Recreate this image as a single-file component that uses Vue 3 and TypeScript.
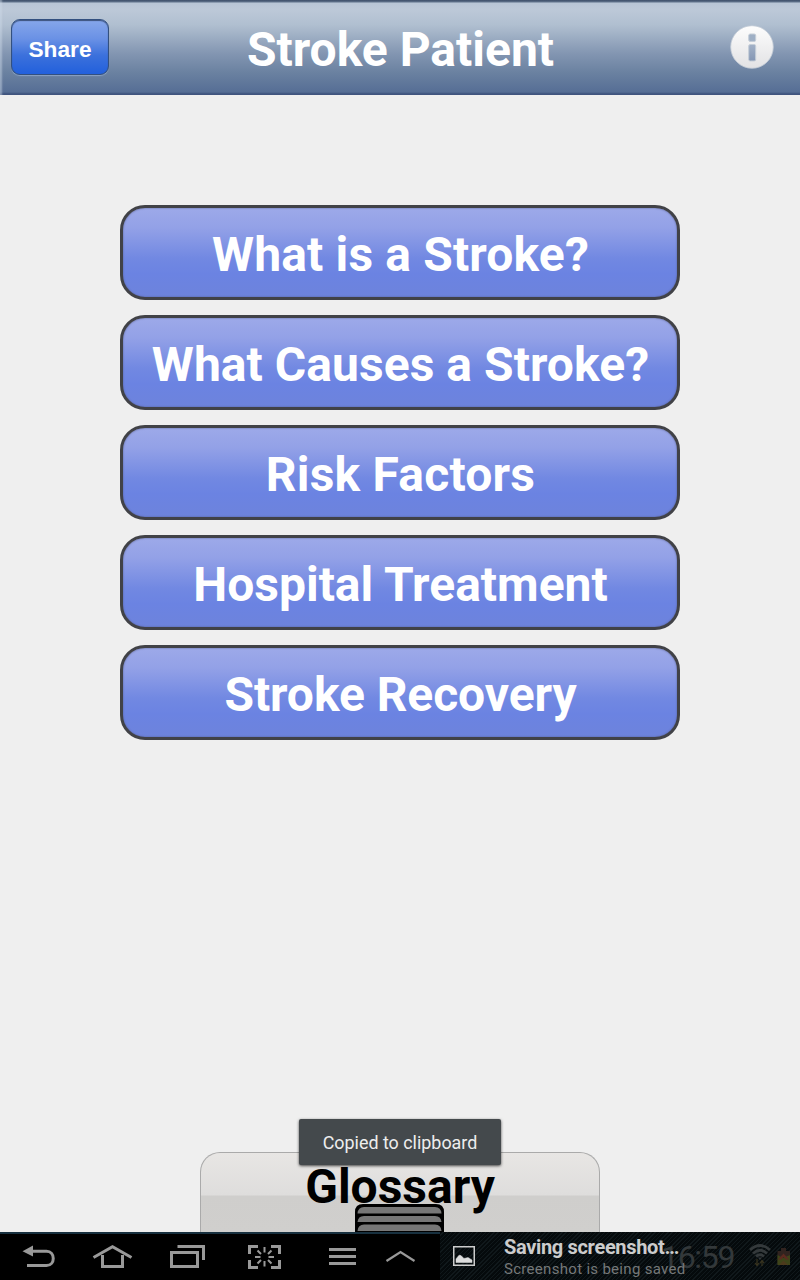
<script setup lang="ts">
interface Topic {
  label: string
  spacing: number
}

const topics: Topic[] = [
  { label: 'What is a Stroke?', spacing: 0.15 },
  { label: 'What Causes a Stroke?', spacing: 0.05 },
  { label: 'Risk Factors', spacing: 0.2 },
  { label: 'Hospital Treatment', spacing: 0 },
  { label: 'Stroke Recovery', spacing: -0.08 },
]
</script>

<template>
  <div class="screen">
    <header class="header">
      <button class="share">Share</button>
      <h1 class="title">Stroke Patient</h1>
      <svg class="info" width="44" height="44" viewBox="0 0 44 44">
        <defs>
          <linearGradient id="infoFill" x1="0" y1="0" x2="0" y2="1">
            <stop offset="0" stop-color="#fdfdfd" />
            <stop offset="1" stop-color="#e2e2e4" />
          </linearGradient>
          <linearGradient id="infoMark" x1="0" y1="0" x2="0" y2="1">
            <stop offset="0" stop-color="#a2b1c7" />
            <stop offset="1" stop-color="#8496b4" />
          </linearGradient>
        </defs>
        <circle cx="22" cy="22" r="21.3" fill="url(#infoFill)" stroke="#c2cad6" stroke-width="0.8" />
        <rect x="18.700" y="9" width="7" height="7.400" rx="1.500" fill="#9eafc5" stroke="#c5ced8" />
        <rect x="18.700" y="19.500" width="7" height="16.500" rx="1.500" fill="url(#infoMark)" stroke="#c5ced8" />
      </svg>
    </header>

    <main class="topics">
      <button v-for="t in topics" :key="t.label" class="topic">
        <span :style="{ letterSpacing: t.spacing + 'px' }">{{ t.label }}</span>
      </button>
    </main>

    <section class="drawer">
      <div class="toast">Copied to clipboard</div>
      <h2 class="glossary">Glossary</h2>
      <svg class="grip" width="90" height="29" viewBox="0 0 90 29">
        <path d="M0 29V8Q0 0 8 0H81Q89 0 89 8V29Z" fill="#000" />
        <path d="M2.500 9.500Q3 3 9 3H80Q86 3 86.500 9.500Z" fill="#777" />
        <path d="M2.500 18Q3 12 9 12H80Q86 12 86.500 18Z" fill="#777" />
        <path d="M2.500 27Q3 20.500 9 20.500H80Q86 20.500 86.500 27Z" fill="#777" />
      </svg>
    </section>

    <footer class="navbar">
      <svg class="keys" width="440" height="48" viewBox="0 0 440 48" fill="none" stroke="#999" stroke-width="3">
        <path d="M31 19.300H46.500C55.500 19.300 55.500 33.500 46.500 33.500H27" />
        <path d="M22.500 19.300L33 13.500V24.500Z" fill="#999" stroke="none" />
        <path d="M93.500 25.500L112.500 14.800L131.500 25.500" />
        <path d="M102.500 23V34.500H122.500V23" />
        <rect x="171.500" y="20.500" width="26" height="14" />
        <path d="M177.500 14.500H203.500V28" />
        <path d="M249.500 22V14.500H258M271 14.500H279.500V22M279.500 28V35.500H271M258 35.500H249.500V28" />
        <path d="M264.500 15V20.500M264.500 29V34.500M255 25H260.500M268.500 25H274M257.500 18.500L261 22M271.500 18.500L268 22M257.500 31.500L261 28M271.500 31.500L268 28" stroke-width="2" />
        <path d="M329 17.500H356M329 24.500H356M329 31.500H356" />
        <path d="M386.500 29L400.500 20L414.500 29" stroke-width="2.200" />
      </svg>
      <div class="notice">
        <svg class="photo" width="22" height="20" viewBox="0 0 22 20">
          <rect x="0.750" y="0.750" width="20.500" height="18.500" fill="none" stroke="#ccc" stroke-width="1.500" />
          <path d="M3 16.500V13L6 9.300L8 9.500L11 12.500L15 11.500L19 14V16.500Z" fill="#ddd" stroke="#ddd" stroke-width="0.500" />
        </svg>
        <div class="notice-text">
          <div class="notice-title">Saving screenshot…</div>
          <div class="notice-body">Screenshot is being saved</div>
        </div>
        <div class="clock">16:59</div>
        <svg class="status" width="50" height="30" viewBox="0 0 50 30">
          <g fill="none" stroke="#34393b" stroke-width="2.700">
            <path d="M1 7Q11 -2 21 7" />
            <path d="M4 10.500Q11 4 18 10.500" />
            <path d="M7 13.500Q11 10 15 13.500" />
          </g>
          <path d="M9 14.500H13L11 17Z" fill="#34393b" />
          <path d="M8 16V22M6 20L8 22.500L10 20M13 23V17.500M11 20L13 17.500L15 20" fill="none" stroke="#39341f" stroke-width="1.200" />
          <path d="M28.500 8H32V5H37V8H41V22H28.500Z" fill="#31231f" />
          <path d="M28.500 12L34 15L41 12V22H28.500Z" fill="#3d4419" />
          <path d="M34.500 10.500L40 16.500H37L34.500 14L32 16.500H29Z" fill="#5c2a20" />
          <path d="M30 22L34.500 17.500L39 22Z" fill="#4c3a1c" />
        </svg>
      </div>
    </footer>
  </div>
</template>

<style>
body {
  margin: 0;
  background: #efefef;
}
</style>

<style scoped>
.screen {
  width: 800px;
  height: 1280px;
  display: flex;
  flex-direction: column;
  overflow: hidden;
  background: #efefef;
  font-family: Roboto, sans-serif;
}
button {
  font: inherit;
  box-sizing: border-box;
  padding: 0;
}
.header {
  box-sizing: border-box;
  height: 95px;
  flex: none;
  display: flex;
  align-items: center;
  padding: 0 26px 1px 11px;
  background: linear-gradient(#384a65 0, #61738c 2px, #b9c6d6 3px, #bdc9d8 9px, #b0bfd0 25px, #8295b1 54px, #6b82a1 72px, #566e95 92px, #3d527c 94px, #3d527c 95px);
  box-shadow: inset 3px 0 2px -1px rgba(205, 218, 232, 0.5);
}
.share {
  width: 98px;
  height: 56px;
  border: 1.500px solid #33507f;
  border-radius: 9px;
  background: linear-gradient(#86a7eb, #6a91e5 35%, #3c71dc 65%, #2260dc);
  box-shadow: 0 1px 1px #8aa2c4, inset 0 1px 1px #3b527c;
  color: #fff;
  font: bold 22.700px "Liberation Sans", Arial, sans-serif;
  line-height: 54px;
  padding-top: 2px;
}
.title {
  flex: 1;
  margin: 0 0 0 -38px;
  padding-top: 6px;
  color: #fff;
  font-size: 48px;
  font-weight: 700;
  line-height: 56px;
  text-align: center;
}
.info {
  flex: none;
}
.topics {
  flex: 1;
  display: flex;
  flex-direction: column;
  align-items: center;
  gap: 15px;
  padding-top: 110px;
}
.topic {
  width: 560px;
  height: 95px;
  border: 3px solid #414247;
  border-radius: 25px;
  background: linear-gradient(#9da9e9, #93a1e7 22%, #7188e2 57%, #6b83e2 74%, #6d83dc);
  box-shadow: inset 0 0 2px #565f91;
  color: #fff;
  font-size: 48px;
  font-weight: 700;
  line-height: 56px;
  padding: 4px 0 0 1px;
  white-space: nowrap;
}
.drawer {
  position: relative;
  box-sizing: border-box;
  width: 400px;
  height: 80px;
  flex: none;
  align-self: center;
  border: 1px solid #aaa;
  border-bottom: 0;
  border-radius: 20px 20px 0 0;
  background: linear-gradient(#e8e6e4, #dedddc 42px, #cfcecc 43px, #d0cfcd);
}
.glossary {
  margin: 0;
  padding-top: 6px;
  color: #000;
  font-size: 48px;
  font-weight: 700;
  line-height: 56px;
  text-align: center;
}
.toast {
  position: absolute;
  left: 98px;
  top: -34px;
  width: 202px;
  height: 46px;
  border-radius: 2px;
  background: #44494c;
  box-shadow: 0 1px 3px rgba(0, 0, 0, 0.7);
  color: #eee;
  font-size: 17.900px;
  line-height: 48px;
  text-align: center;
}
.grip {
  position: absolute;
  left: 154px;
  top: 51px;
}
.navbar {
  position: relative;
  height: 48px;
  flex: none;
  display: flex;
  background: linear-gradient(#17303f 2px, #000 2px);
}
.keys {
  flex: none;
}
.notice {
  position: relative;
  width: 360px;
  height: 48px;
  display: flex;
  background: repeating-linear-gradient(135deg, #050a0c 0, #050a0c 2px, #10181b 2px, #10181b 3px);
}
.photo {
  margin: 14px 0 0 13px;
  flex: none;
}
.notice-text {
  position: relative;
  z-index: 1;
  margin-left: 29px;
  white-space: nowrap;
}
.notice-title {
  margin-top: 3px;
  color: #ccc;
  font-size: 20px;
  font-weight: 700;
  line-height: 24px;
  letter-spacing: -0.330px;
}
.notice-body {
  margin-top: 1px;
  color: #757879;
  font-size: 15px;
  line-height: 18px;
  letter-spacing: 0.300px;
}
.clock {
  position: absolute;
  left: 221px;
  top: 6px;
  color: #33383a;
  font-size: 32px;
  line-height: 38px;
  letter-spacing: -1.300px;
}
.status {
  position: absolute;
  left: 309px;
  top: 11px;
}
</style>
